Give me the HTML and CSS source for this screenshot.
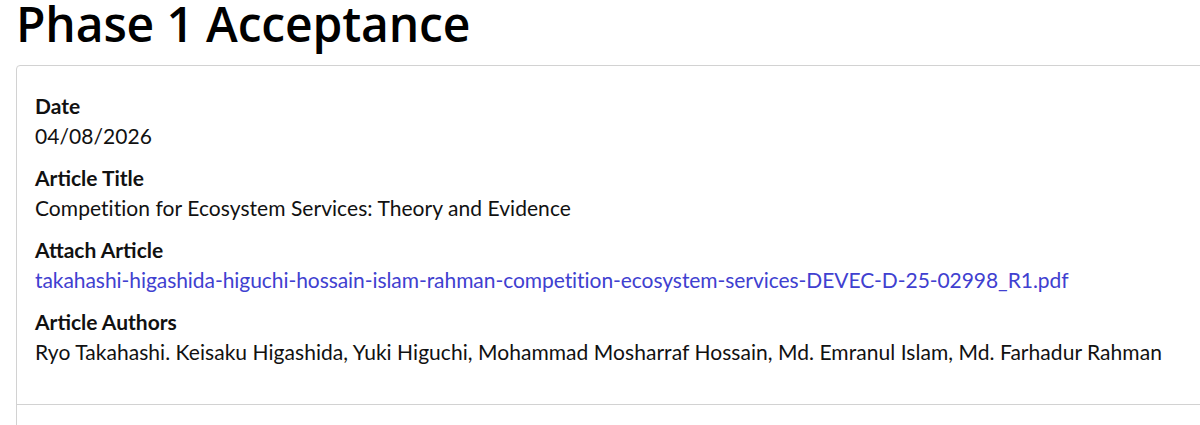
FILE: index.html
```html
<!DOCTYPE html>
<html lang="en">
<head>
<meta charset="utf-8">
<title>Phase 1 Acceptance</title>
<link rel="stylesheet" href="styles.css">
</head>
<body>
<main class="page">
  <h1 class="page-title">Phase 1 Acceptance</h1>
  <section class="card">
    <div class="card-body">
      <div class="field">
        <div class="field-label">Date</div>
        <div class="field-value">04/08/2026</div>
      </div>
      <div class="field">
        <div class="field-label">Article Title</div>
        <div class="field-value">Competition for Ecosystem Services: Theory and Evidence</div>
      </div>
      <div class="field">
        <div class="field-label">Attach Article</div>
        <div class="field-value"><a class="file-link" href="#">takahashi-higashida-higuchi-hossain-islam-rahman-competition-ecosystem-services-DEVEC-D-25-02998_R1.pdf</a></div>
      </div>
      <div class="field">
        <div class="field-label">Article Authors</div>
        <div class="field-value">Ryo Takahashi. Keisaku Higashida, Yuki Higuchi, Mohammad Mosharraf Hossain, Md. Emranul Islam, Md. Farhadur Rahman</div>
      </div>
    </div>
    <div class="card-footer"></div>
  </section>
</main>
</body>
</html>
```
FILE: styles.css
```css
html, body {
  margin: 0;
  padding: 0;
  background: #ffffff;
}
body {
  font-family: "Lato", "Open Sans", sans-serif;
  color: #111111;
}
.page {
  padding: 0 0 0 16px;
}
.page-title {
  margin: 0;
  padding: 0;
  font-family: "Open Sans", sans-serif;
  font-weight: 600;
  font-size: 48px;
  line-height: 48px;
  letter-spacing: -0.15px;
  color: #000;
}
.card {
  margin-top: 17px;
  width: 1220px;
  border: 1px solid #d2d2d2;
  border-radius: 4px;
}
.card-body {
  padding: 25px 18px 25px;
}
.field {
  margin-bottom: 12px;
}
.field-label {
  font-weight: 700;
  font-size: 21px;
  line-height: 30px;
}
.field-value {
  font-size: 21px;
  line-height: 30px;
  letter-spacing: 0.05px;
}
.file-link {
  color: #4040d0;
  text-decoration: none;
  letter-spacing: -0.06px;
}
.card-footer {
  border-top: 1px solid #d2d2d2;
  height: 40px;
}
```
